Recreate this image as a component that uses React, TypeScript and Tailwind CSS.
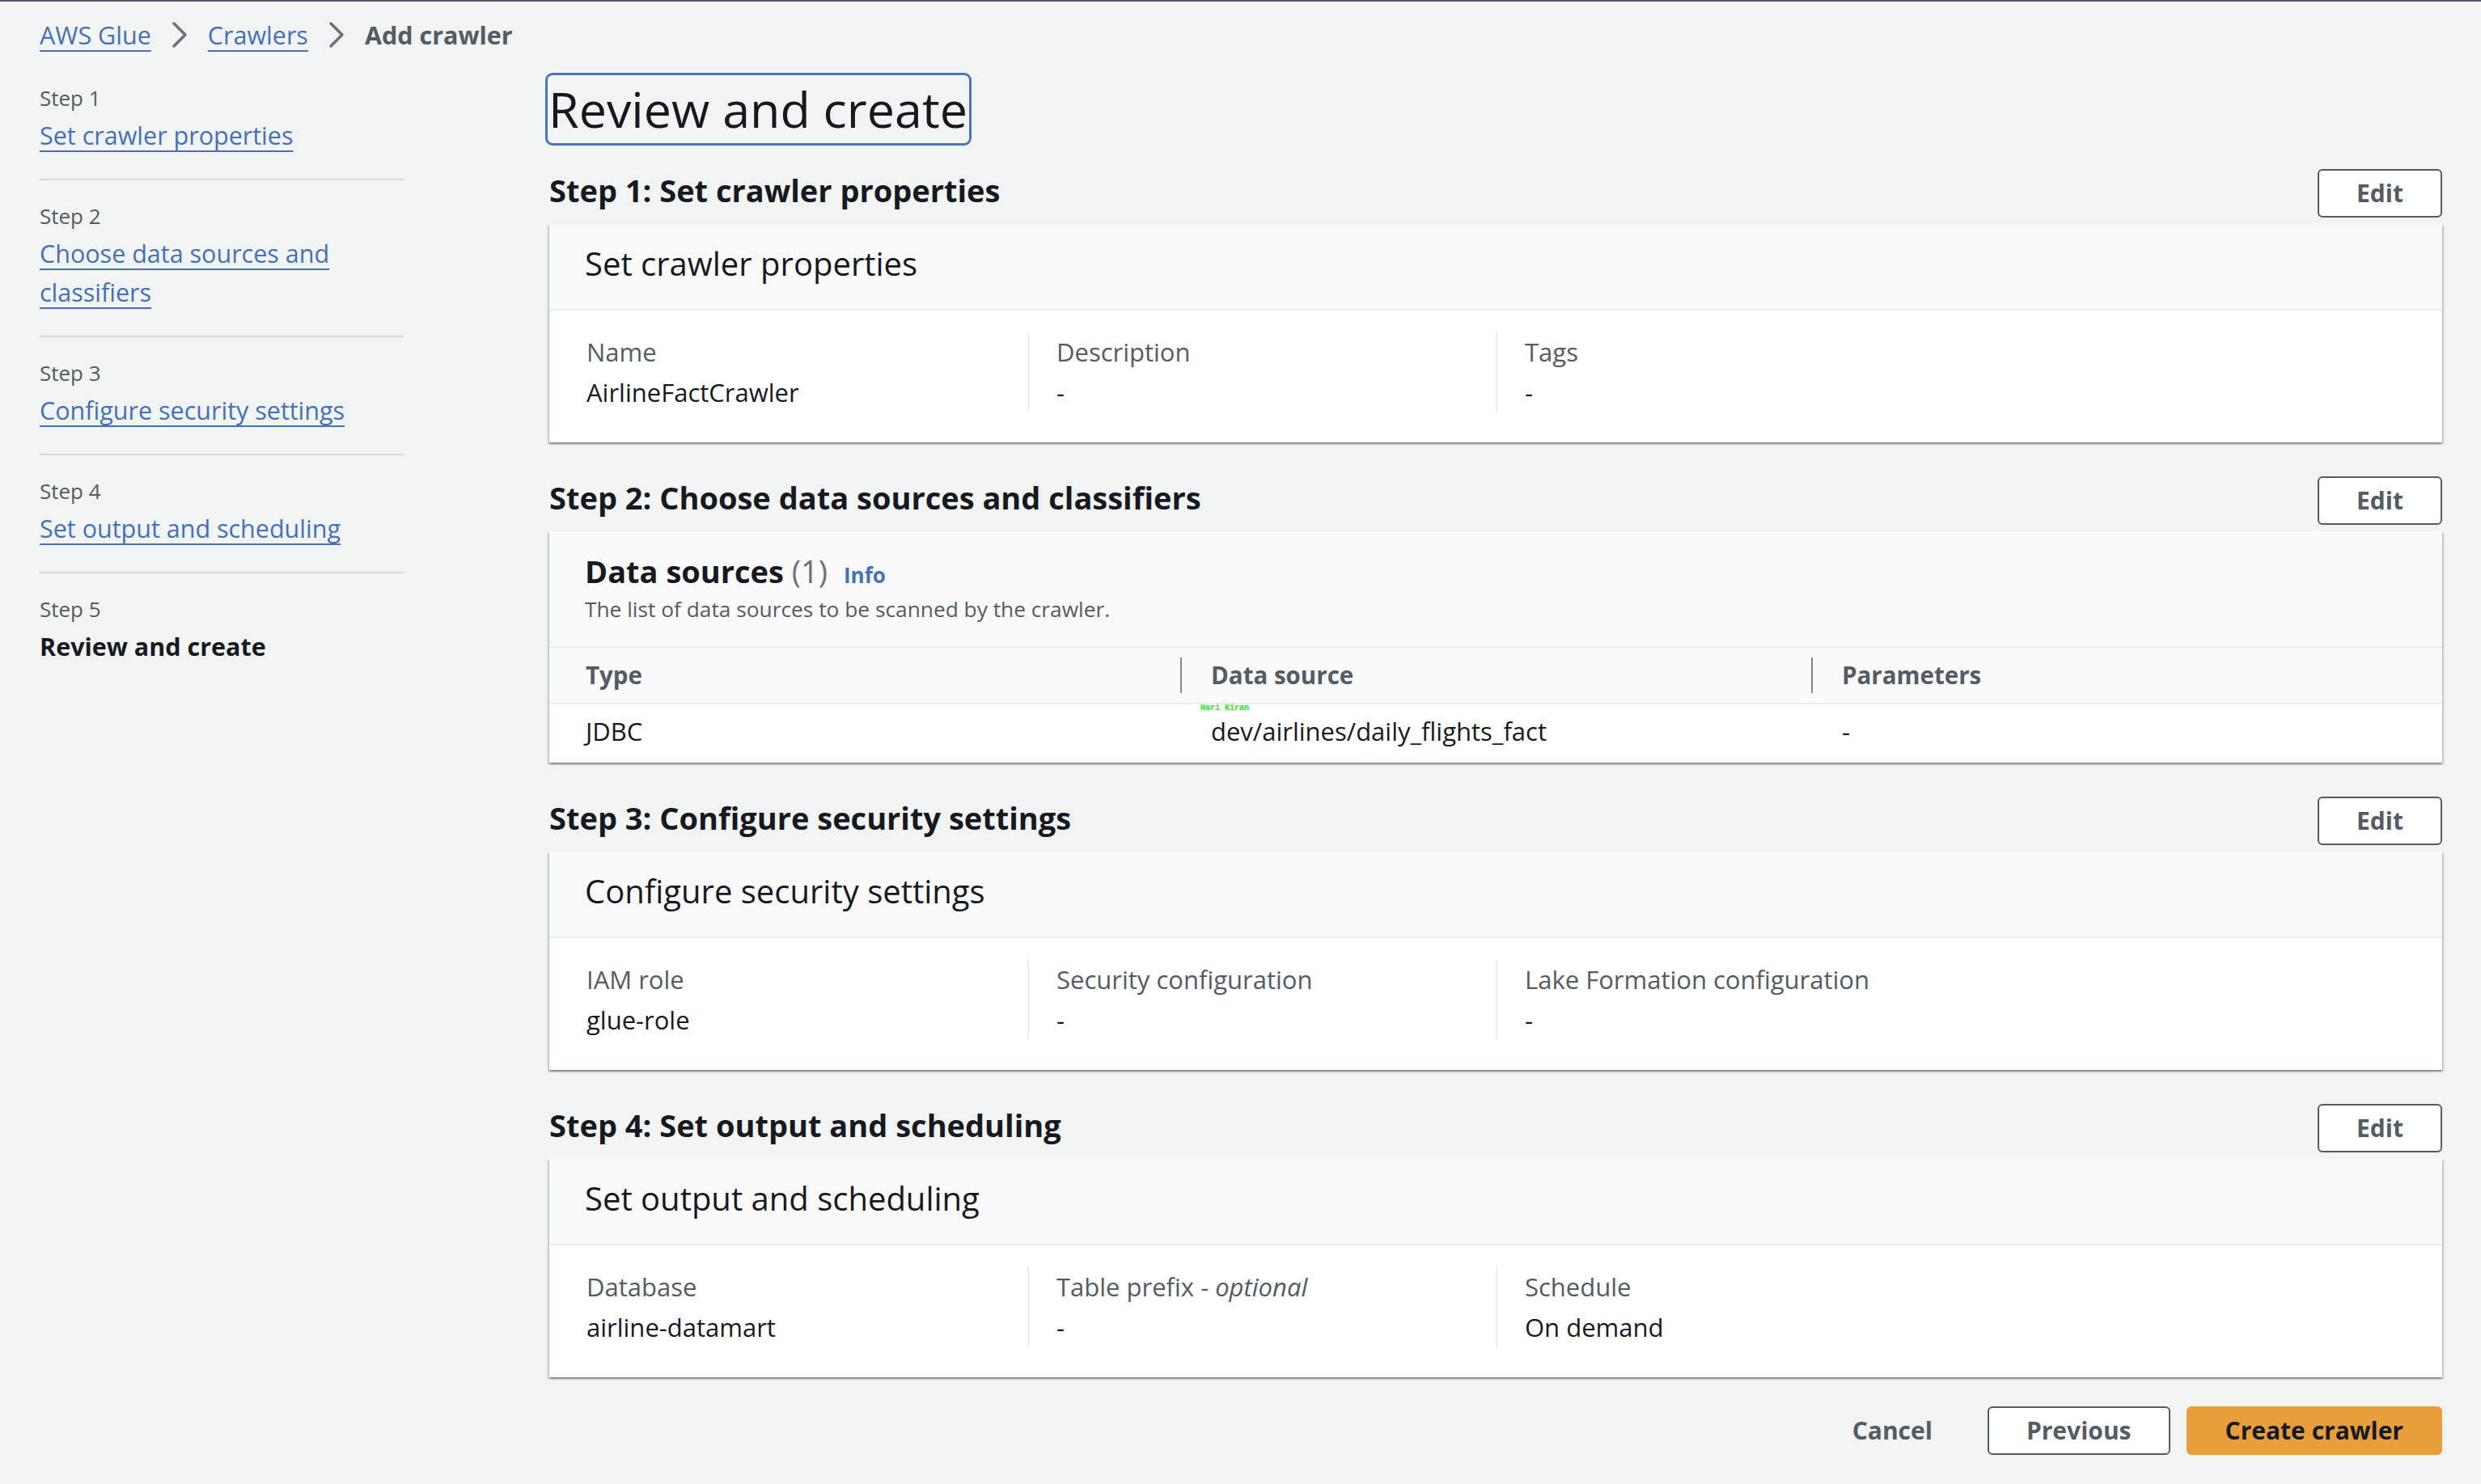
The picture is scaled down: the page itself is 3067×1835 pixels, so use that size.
import type { ReactNode } from "react";

const LINK =
  "text-[#4471b7] underline decoration-2 underline-offset-[7px]";

const STEPS = [
  { label: "Step 1", title: "Set crawler properties" },
  { label: "Step 2", title: "Choose data sources and classifiers" },
  { label: "Step 3", title: "Configure security settings" },
  { label: "Step 4", title: "Set output and scheduling" },
  { label: "Step 5", title: "Review and create", current: true },
];

function Chevron() {
  return (
    <svg
      width="20"
      height="34"
      viewBox="0 0 20 34"
      fill="none"
      stroke="#687078"
      strokeWidth="3.5"
      strokeLinecap="round"
      strokeLinejoin="round"
    >
      <path d="M3 3l14 14L3 31" />
    </svg>
  );
}

function Button({
  children,
  variant = "normal",
}: {
  children: ReactNode;
  variant?: "normal" | "primary" | "link";
}) {
  const styles = {
    normal: "border-[#545b64] bg-white text-[#545b64]",
    primary: "border-[#e99d3b] bg-[#e99d3b] text-[#16191f]",
    link: "border-transparent text-[#545b64]",
  };
  return (
    <button
      className={`rounded-[6px] border-2 px-[46px] py-[6px] text-[30px] leading-[44px] font-bold ${styles[variant]}`}
    >
      {children}
    </button>
  );
}

function Section({ title, children }: { title: string; children: ReactNode }) {
  return (
    <section>
      <div className="mb-2 flex items-center justify-between">
        <h2 className="pb-[8px] text-[38px] leading-[48px] font-bold text-[#16191f]">
          {title}
        </h2>
        <Button>Edit</Button>
      </div>
      <div className="bg-white shadow-[0_2px_2px_0_rgba(0,28,36,0.3),2px_2px_2px_0_rgba(0,28,36,0.15),-2px_2px_2px_0_rgba(0,28,36,0.15)]">
        {children}
      </div>
    </section>
  );
}

function KeyValues({
  heading,
  items,
}: {
  heading: string;
  items: { label: ReactNode; value: string }[];
}) {
  return (
    <>
      <div className="border-b-2 border-[#eaeded] bg-[#fafafa] px-[44px] pt-[23px] pb-[30px]">
        <h3 className="text-[40px] leading-[52px] text-[#16191f]">{heading}</h3>
      </div>
      <div className="grid grid-cols-4 px-[12px] pt-[26px] pb-[37px]">
        {items.map((item, i) => (
          <div
            key={i}
            className={`pl-[34px] text-[31px] leading-[50px] ${
              i > 0 ? "border-l-2 border-[#eaeded]" : ""
            }`}
          >
            <div className="text-[#545b64]">{item.label}</div>
            <div className="text-[#16191f]">{item.value}</div>
          </div>
        ))}
      </div>
    </>
  );
}

export default function App() {
  return (
    <div className="min-h-screen border-t-2 border-[#545b64] bg-[#f2f3f3] pr-[48px] pl-[49px] font-['Open_Sans',sans-serif] text-[#16191f]">
      <nav className="flex items-center gap-[25px] pt-[19px] text-[30.5px] leading-[44px]">
        <a className={LINK}>AWS Glue</a>
        <Chevron />
        <a className={LINK}>Crawlers</a>
        <Chevron />
        <span className="font-bold text-[#545b64]">Add crawler</span>
      </nav>

      <div className="mt-[25px] flex gap-[180px]">
        <aside className="w-[450px] shrink-0 pt-[13px]">
          {STEPS.map((step, i) => (
            <div
              key={step.label}
              className={`pb-[30px] ${
                i > 0 ? "pt-[26px]" : ""
              } ${i < STEPS.length - 1 ? "border-b-2 border-[#d5dbdb]" : ""}`}
            >
              <div className="text-[26px] leading-[36px] text-[#545b64]">
                {step.label}
              </div>
              <div className="mt-1 text-[30.5px] leading-[48px]">
                {step.current ? (
                  <span className="font-bold text-[#16191f]">{step.title}</span>
                ) : (
                  <a className={LINK}>{step.title}</a>
                )}
              </div>
            </div>
          ))}
        </aside>

        <main className="flex w-[2340px] flex-col">
          <div>
            <h1 className="-ml-[5px] inline-block rounded-[9px] border-[3px] border-[#4b75bd] pr-[2px] pl-[1px] text-[61px] leading-[84px] text-[#16191f]">
              Review and create
            </h1>
          </div>

          <div className="mt-[29px] flex flex-col gap-[42px]">
            <Section title="Step 1: Set crawler properties">
              <KeyValues
                heading="Set crawler properties"
                items={[
                  { label: "Name", value: "AirlineFactCrawler" },
                  { label: "Description", value: "-" },
                  { label: "Tags", value: "-" },
                ]}
              />
            </Section>

            <Section title="Step 2: Choose data sources and classifiers">
              <div className="border-b-2 border-[#eaeded] bg-[#fafafa] px-[44px] pt-[24px] pb-[28px]">
                <div className="flex items-baseline">
                  <h3 className="text-[38px] leading-[50px] font-bold text-[#16191f]">
                    Data sources{" "}
                    <span className="font-normal text-[#687078]">(1)</span>
                  </h3>
                  <a className="ml-[20px] text-[26px] font-bold text-[#4471b7]">
                    Info
                  </a>
                </div>
                <p className="mt-1 text-[26.3px] leading-[36px] text-[#545b64]">
                  The list of data sources to be scanned by the crawler.
                </p>
              </div>
              <div className="grid grid-cols-3 border-b-2 border-[#eaeded] bg-[#fafafa] py-[12px] text-[29.5px] leading-[44px] font-bold text-[#545b64]">
                <div className="pl-[45px]">Type</div>
                <div className="border-l-2 border-[#7d8998] pl-[36px]">
                  Data source
                </div>
                <div className="border-l-2 border-[#7d8998] pl-[36px]">
                  Parameters
                </div>
              </div>
              <div className="grid grid-cols-3 pt-[11px] pb-[17px] text-[31px] leading-[44px]">
                <div className="pl-[45px]">JDBC</div>
                <div className="relative pl-[38px]">
                  <span className="absolute -top-[11px] left-[25px] font-['Liberation_Mono',monospace] text-[10px] leading-[10px] font-bold text-[#00ff00]">
                    Hari Kiran
                  </span>
                  dev/airlines/daily_flights_fact
                </div>
                <div className="pl-[38px]">-</div>
              </div>
            </Section>

            <Section title="Step 3: Configure security settings">
              <KeyValues
                heading="Configure security settings"
                items={[
                  { label: "IAM role", value: "glue-role" },
                  { label: "Security configuration", value: "-" },
                  { label: "Lake Formation configuration", value: "-" },
                ]}
              />
            </Section>

            <Section title="Step 4: Set output and scheduling">
              <KeyValues
                heading="Set output and scheduling"
                items={[
                  { label: "Database", value: "airline-datamart" },
                  {
                    label: (
                      <>
                        Table prefix - <i>optional</i>
                      </>
                    ),
                    value: "-",
                  },
                  { label: "Schedule", value: "On demand" },
                ]}
              />
            </Section>
          </div>

          <div className="mt-[36px] flex justify-end gap-[20px] pb-[36px]">
            <Button variant="link">Cancel</Button>
            <Button>Previous</Button>
            <Button variant="primary">Create crawler</Button>
          </div>
        </main>
      </div>
    </div>
  );
}
